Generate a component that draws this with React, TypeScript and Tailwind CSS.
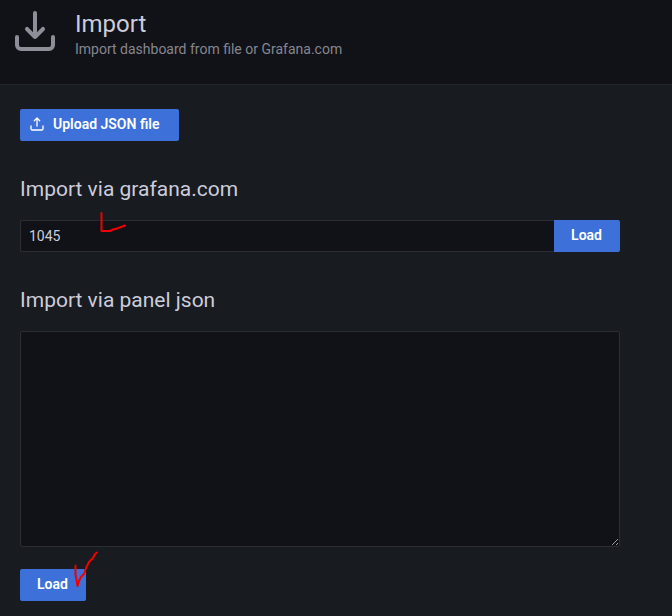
import React from "react";

const buttonClass =
  "flex h-8 shrink-0 items-center bg-[#3d71d9] pb-0.5 text-sm font-semibold text-white hover:bg-[#5a86de]";

const fieldClass = "border border-[#2b2d32] bg-[#111217] px-2 text-sm text-[#ccccdc] outline-none";

const headingClass = "block text-[21px] leading-8";

function ImportIcon() {
  return (
    <svg viewBox="0 0 24 24" className="size-12 shrink-0 fill-[#8e8e99]" aria-hidden="true">
      <path d="M21,14a1,1,0,0,0-1,1v4a1,1,0,0,1-1,1H5a1,1,0,0,1-1-1V15a1,1,0,0,0-2,0v4a3,3,0,0,0,3,3H19a3,3,0,0,0,3-3V15A1,1,0,0,0,21,14Zm-9.71,1.71a1,1,0,0,0,.33.21.94.94,0,0,0,.76,0,1,1,0,0,0,.33-.21l4-4a1,1,0,0,0-1.42-1.42L13,12.59V3a1,1,0,0,0-2,0v9.59l-2.29-2.3a1,1,0,1,0-1.42,1.42Z" />
    </svg>
  );
}

function UploadIcon() {
  return (
    <svg viewBox="0 0 24 24" className="size-4 shrink-0 fill-current" aria-hidden="true">
      <path d="M8.71,7.71,11,5.41V15a1,1,0,0,0,2,0V5.41l2.29,2.3a1,1,0,0,0,1.42,0,1,1,0,0,0,0-1.42l-4-4a1,1,0,0,0-.33-.21,1,1,0,0,0-.76,0,1,1,0,0,0-.33.21l-4,4A1,1,0,1,0,8.71,7.71ZM21,14a1,1,0,0,0-1,1v4a1,1,0,0,1-1,1H5a1,1,0,0,1-1-1V15a1,1,0,0,0-2,0v4a3,3,0,0,0,3,3H19a3,3,0,0,0,3-3V15A1,1,0,0,0,21,14Z" />
    </svg>
  );
}

export default function App() {
  return (
    <div className="min-h-screen bg-[#181b1f] font-['Roboto','Liberation_Sans',sans-serif] text-[#ccccdc]">
      <header className="flex gap-4 border-b border-[#25272c] bg-[#111217] px-[11px] pt-[7px] pb-[27px]">
        <ImportIcon />
        <div>
          <h1 className="text-2xl leading-[34px]">Import</h1>
          <p className="text-sm leading-4 text-[#85868f]">Import dashboard from file or Grafana.com</p>
        </div>
      </header>

      <main className="max-w-[640px] px-5 py-6">
        <button type="button" className={`${buttonClass} gap-2 rounded-xs pr-5 pl-[9px]`}>
          <UploadIcon />
          Upload JSON file
        </button>

        <form className="mt-8" onSubmit={(e) => e.preventDefault()}>
          <label htmlFor="gcom" className={headingClass}>
            Import via grafana.com
          </label>
          <div className="relative mt-[15px] flex">
            <input
              id="gcom"
              type="text"
              defaultValue="1045"
              className={`${fieldClass} h-8 min-w-0 flex-1 rounded-l-xs border-r-0`}
            />
            <button type="submit" className={`${buttonClass} rounded-r-xs pr-[18px] pl-[17px]`}>
              Load
            </button>
            <svg
              viewBox="0 0 26 20"
              className="pointer-events-none absolute -top-2 left-20 h-5 w-[26px] fill-none stroke-[#f00000] stroke-2"
              strokeLinecap="round"
              strokeLinejoin="round"
              aria-hidden="true"
            >
              <path d="M1.5 1V19H10L13 17.5L17 16.5L25 13.5" />
            </svg>
          </div>
        </form>

        <form className="mt-8" onSubmit={(e) => e.preventDefault()}>
          <label htmlFor="json" className={headingClass}>
            Import via panel json
          </label>
          <textarea id="json" className={`${fieldClass} mt-[15px] block h-[216px] w-full rounded-xs py-1`} />
          <div className="relative mt-[22px] w-fit">
            <button type="submit" className={`${buttonClass} rounded-xs pr-[18px] pl-[17px]`}>
              Load
            </button>
            <svg
              viewBox="0 0 26 38"
              className="pointer-events-none absolute -top-[18px] left-[53px] h-[38px] w-[26px] fill-none stroke-[#f00000] stroke-2"
              strokeLinecap="round"
              strokeLinejoin="round"
              aria-hidden="true"
            >
              <path d="M2.5 14.5V24L3.5 29L4.5 35L6 30L8 26L11 23L13 17L16 11L20 7L22 3L24 1.5" />
            </svg>
          </div>
        </form>
      </main>
    </div>
  );
}
